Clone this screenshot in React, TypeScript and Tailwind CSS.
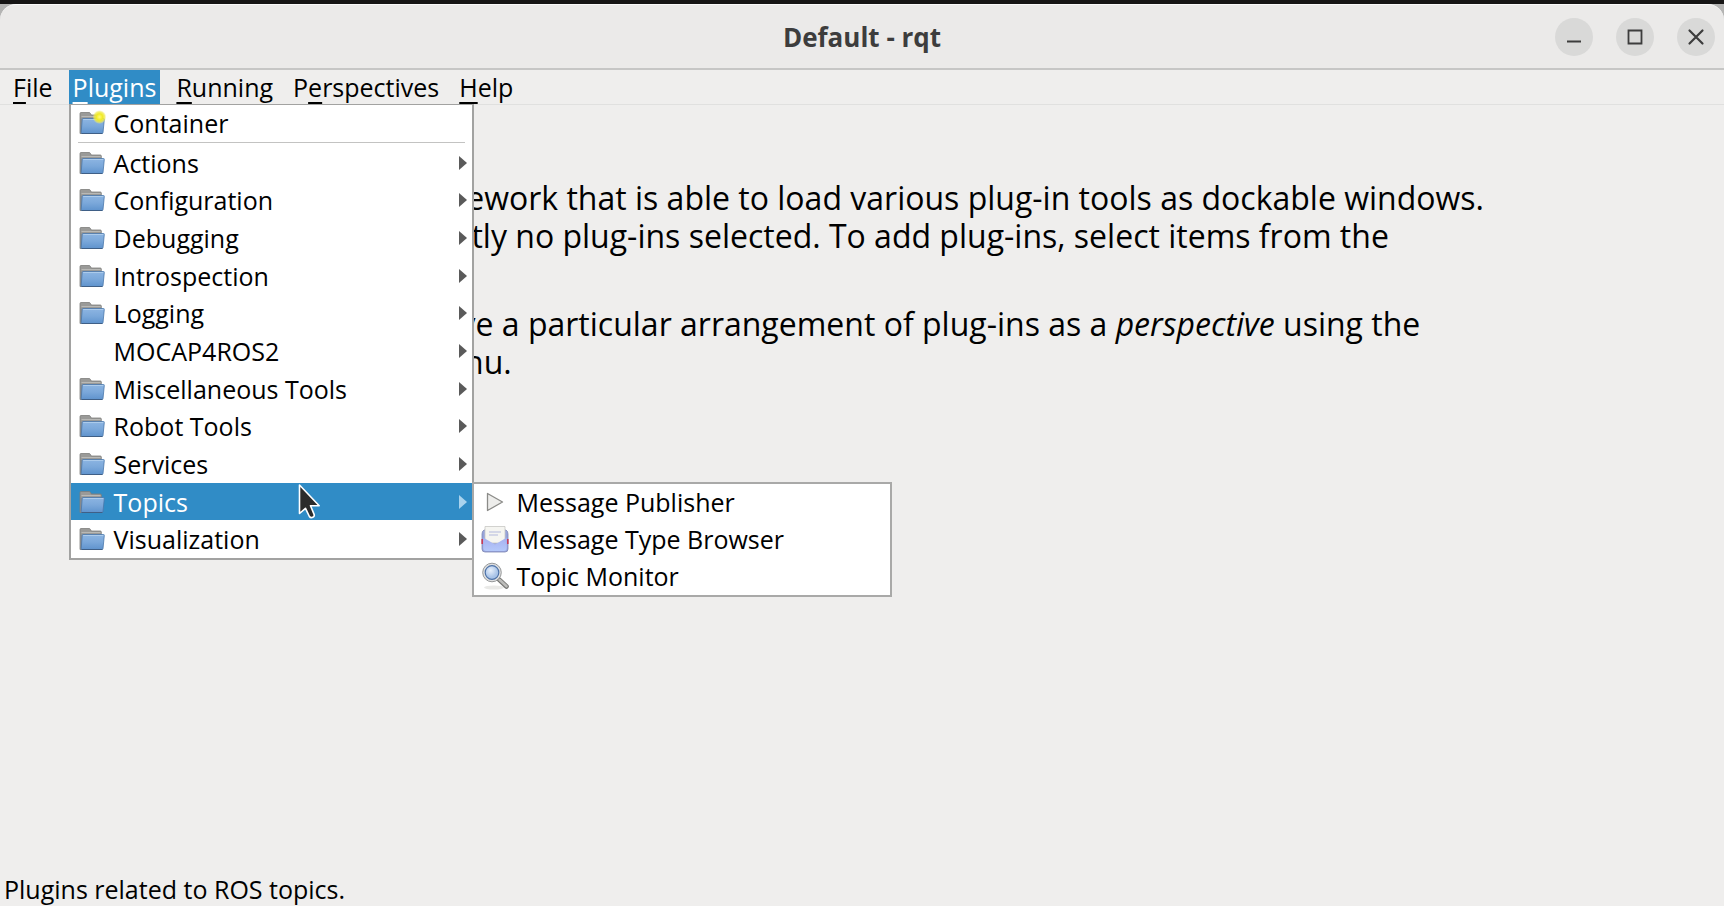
import React from 'react';

function FolderIcon({ fresh = false }: { fresh?: boolean }) {
  return (
    <svg viewBox="0 0 26 24" className="h-6 w-[26px] overflow-visible" aria-hidden="true">
      <defs>
        <linearGradient id="folderFront" x1="0" y1="0" x2="0" y2="1">
          <stop offset="0" stopColor="#8db5e2" />
          <stop offset="0.5" stopColor="#7ba8da" />
          <stop offset="1" stopColor="#5f93cd" />
        </linearGradient>
        <radialGradient id="sparkle">
          <stop offset="0" stopColor="#fff97a" />
          <stop offset="0.45" stopColor="#f0ea25" />
          <stop offset="0.75" stopColor="#efe94a" stopOpacity="0.75" />
          <stop offset="1" stopColor="#f5f18a" stopOpacity="0" />
        </radialGradient>
      </defs>
      <path d="M1 22.500V2.500q0-1 1-1h8q1 0 1.500 1l.8 1.500h9q1 0 1 1V10L4 22.500z" fill="#9a9a98" stroke="#7d7d7b" strokeWidth="0.8" />
      <path d="M2.500 5.500h19" stroke="#b9b9b6" strokeWidth="1" />
      <path d="M2 21V7.500" stroke="#83888d" strokeWidth="1.200" />
      <path d="M4 7.500h20.500q.9 0 .8.9L24 21.600q-.1.900-1 .9H3q-.9 0-.8-.9L3.200 8.400q.1-.9.8-.9z" fill="url(#folderFront)" stroke="#4a77ab" strokeWidth="0.8" />
      <path d="M4.200 8.500h20" stroke="#b5d0ee" strokeWidth="0.8" />
      <path d="M2.600 22.500h20.800" stroke="#3f5f86" strokeWidth="1" />
      {fresh && <circle cx="20.500" cy="6" r="7" fill="url(#sparkle)" />}
    </svg>
  );
}

function PlayIcon() {
  return (
    <svg viewBox="0 0 28 28" className="size-7" aria-hidden="true">
      <path d="M6.500 5.500L21.500 14 6.500 22.500z" fill="#ededeb" stroke="#8b8b88" strokeWidth="1.300" strokeLinejoin="round" />
    </svg>
  );
}

function EnvelopeIcon() {
  return (
    <svg viewBox="0 0 28 28" className="size-7" aria-hidden="true">
      <defs>
        <linearGradient id="envelope" x1="0" y1="0" x2="0" y2="1">
          <stop offset="0" stopColor="#a6b0ef" />
          <stop offset="1" stopColor="#b4c8fa" />
        </linearGradient>
      </defs>
      <path d="M3 5h22q2 1 2 4v15q0 3-3 3H4q-3 0-3-3V9q0-3 2-4z" fill="#97a3dc" stroke="#7f89b4" strokeWidth="0.8" />
      <path d="M1.200 14v5M26.800 14v5" stroke="#c93a55" strokeWidth="1.600" />
      <path d="M4 1.500h20V18H4z" fill="#f5f5f1" stroke="#c8c8c4" strokeWidth="0.8" />
      <path d="M8 7h12M8 10h9" stroke="#b3b9dd" strokeWidth="1.200" />
      <path d="M2.200 12.500L14 19.500l11.800-7V23q0 3-3 3H5.200q-3 0-3-3z" fill="url(#envelope)" />
    </svg>
  );
}

function MagnifierIcon() {
  return (
    <svg viewBox="0 0 28 28" className="size-7" aria-hidden="true">
      <defs>
        <radialGradient id="lens" cx="0.4" cy="0.35">
          <stop offset="0" stopColor="#e8f0fb" />
          <stop offset="1" stopColor="#a9c4e8" />
        </radialGradient>
      </defs>
      <ellipse cx="13" cy="25.500" rx="10" ry="2" fill="#e9e9e7" />
      <path d="M18 17.500l7.500 7" stroke="#747472" strokeWidth="4.600" strokeLinecap="round" />
      <path d="M18.500 17.800l7 6.500" stroke="#bcbcba" strokeWidth="2.600" strokeLinecap="round" />
      <circle cx="11" cy="10.500" r="9.300" fill="#dedfe0" stroke="#8c8e90" strokeWidth="0.9" />
      <circle cx="11" cy="10.500" r="6.800" fill="url(#lens)" stroke="#4d72a8" strokeWidth="1.200" />
    </svg>
  );
}

function SubmenuArrow({ active }: { active: boolean }) {
  return (
    <svg viewBox="0 0 8 14" className="h-3.5 w-2" aria-hidden="true">
      <path d="M0 0L8 7 0 14z" fill={active ? '#a9d3ee' : '#5a5a5a'} />
    </svg>
  );
}

function Pointer() {
  return (
    <svg viewBox="0 0 24 36" className="pointer-events-none absolute left-[227px] top-0 h-9 w-6" aria-hidden="true">
      <path
        d="M1.500 2v28.500l6-5.200 3.900 8.200q1.300 1.800 3.400.8t1.200-3.200L12.500 22.700h8.700z"
        fill="#2b2b2b"
        stroke="#ffffff"
        strokeWidth="1.600"
        strokeLinejoin="round"
      />
    </svg>
  );
}

const PLUGIN_GROUPS = [
  { label: 'Actions', icon: true },
  { label: 'Configuration', icon: true },
  { label: 'Debugging', icon: true },
  { label: 'Introspection', icon: true },
  { label: 'Logging', icon: true },
  { label: 'MOCAP4ROS2', icon: false },
  { label: 'Miscellaneous Tools', icon: true },
  { label: 'Robot Tools', icon: true },
  { label: 'Services', icon: true },
  { label: 'Topics', icon: true },
  { label: 'Visualization', icon: true },
];

const TOPIC_PLUGINS = [
  { label: 'Message Publisher', Icon: PlayIcon },
  { label: 'Message Type Browser', Icon: EnvelopeIcon },
  { label: 'Topic Monitor', Icon: MagnifierIcon },
];

function TopicsMenu() {
  return (
    <ul role="menu" aria-label="Topics" className="absolute -top-px left-full z-20 flex h-[115px] w-[420px] flex-col border-2 border-[#a9a9a8] bg-white text-black">
      {TOPIC_PLUGINS.map(({ label, Icon }) => (
        <li key={label} role="none" className="flex flex-1">
          <button type="button" role="menuitem" className="flex w-full items-center gap-2 pl-[7px] text-left">
            <Icon />
            {label}
          </button>
        </li>
      ))}
    </ul>
  );
}

function PluginsMenu() {
  return (
    <div className="absolute left-0 top-full z-10 w-[405px] border-2 border-t border-[#a2a2a1] bg-white text-black">
      <ul role="menu" aria-label="Plugins">
        <li role="none">
          <button type="button" role="menuitem" className="flex h-9 w-full items-center gap-[9px] pl-2 text-left">
            <FolderIcon fresh />
            Container
          </button>
        </li>
        <li role="separator" className="mx-[7px] my-px h-px bg-[#c3c3c2]" />
        <li role="none">
          <ul role="group" className="flex h-[414px] flex-col">
            {PLUGIN_GROUPS.map(({ label, icon }) => {
              const active = label === 'Topics';
              return (
                <li key={label} role="none" className="relative flex flex-1">
                  <button
                    type="button"
                    role="menuitem"
                    aria-haspopup="menu"
                    aria-expanded={active}
                    className={
                      active
                        ? 'flex w-full items-center gap-[9px] bg-[#308cc6] pl-2 pr-[5px] text-left text-white'
                        : 'flex w-full items-center gap-[9px] pl-2 pr-[5px] text-left'
                    }
                  >
                    <span className="w-[26px]">{icon && <FolderIcon />}</span>
                    <span className="flex-1">{label}</span>
                    <SubmenuArrow active={active} />
                  </button>
                  {active && <TopicsMenu />}
                  {active && <Pointer />}
                </li>
              );
            })}
          </ul>
        </li>
      </ul>
    </div>
  );
}

const MENUS = [
  { before: '', key: 'F', after: 'ile' },
  { before: '', key: 'P', after: 'lugins' },
  { before: '', key: 'R', after: 'unning' },
  { before: 'P', key: 'e', after: 'rspectives' },
  { before: '', key: 'H', after: 'elp' },
];

function MenuBar() {
  return (
    <nav aria-label="Menu bar" className="flex h-[35px] gap-3 border-b border-[#e0e0df] pl-[9px]">
      {MENUS.map(({ before, key, after }) => {
        const open = after === 'lugins';
        return (
          <div key={key} className="relative flex">
            <button
              type="button"
              aria-haspopup="menu"
              aria-expanded={open}
              className={open ? 'bg-[#308cc6] px-1 text-white' : 'px-1'}
            >
              {before}
              <span className="underline decoration-2 underline-offset-[5px]">{key}</span>
              {after}
            </button>
            {open && <PluginsMenu />}
          </div>
        );
      })}
    </nav>
  );
}

function TitleBar() {
  return (
    <header className="grid h-[66px] grid-cols-[1fr_auto_1fr] items-center rounded-t-[16px] border-t border-b-2 border-t-[#fafafa] border-b-[#c6c6c5] bg-[#ebeae9] px-[9px] text-[#3d3d3d]">
      <span />
      <h1 className="text-[26px] font-bold leading-8">Default - rqt</h1>
      <div className="flex justify-end gap-[23px]">
        <button type="button" aria-label="Minimize" className="size-[38px] rounded-full bg-[#d9d9d8]">
          <svg viewBox="0 0 38 38" className="size-full" aria-hidden="true">
            <path d="M12 23.500h14" stroke="#3d3d3d" strokeWidth="2" />
          </svg>
        </button>
        <button type="button" aria-label="Maximize" className="size-[38px] rounded-full bg-[#d9d9d8]">
          <svg viewBox="0 0 38 38" className="size-full" aria-hidden="true">
            <path d="M12.500 12.500h13v13h-13z" fill="none" stroke="#3d3d3d" strokeWidth="1.800" />
          </svg>
        </button>
        <button type="button" aria-label="Close" className="size-[38px] rounded-full bg-[#d9d9d8]">
          <svg viewBox="0 0 38 38" className="size-full" aria-hidden="true">
            <path d="M12.500 12.500l13 13M25.500 12.500l-13 13" stroke="#3d3d3d" strokeWidth="2.200" strokeLinecap="round" />
          </svg>
        </button>
      </div>
    </header>
  );
}

export default function App() {
  return (
    <div className="flex min-h-screen flex-col bg-[#efeeed] font-['Open_Sans','Noto_Sans',sans-serif] text-[25px] leading-8 text-black">
      <div className="border-t-4 border-[#161515] bg-[#b4b4b3]">
        <TitleBar />
      </div>
      <MenuBar />
      <main className="flex flex-1 flex-col gap-3 pl-[221px] pt-[74px] text-[32px] leading-[38px]">
        <p>
          rqt is a GUI framework that is able to load various plug-in tools as dockable windows.
          <br />
          There are currently no plug-ins selected. To add plug-ins, select items from the
          <br />
          Plugins menu.
        </p>
        <p>
          You may also save a particular arrangement of plug-ins as a <em>perspective</em> using the
          <br />
          Perspectives menu.
        </p>
      </main>
      <footer role="status" className="px-1 pb-px">
        Plugins related to ROS topics.
      </footer>
    </div>
  );
}
